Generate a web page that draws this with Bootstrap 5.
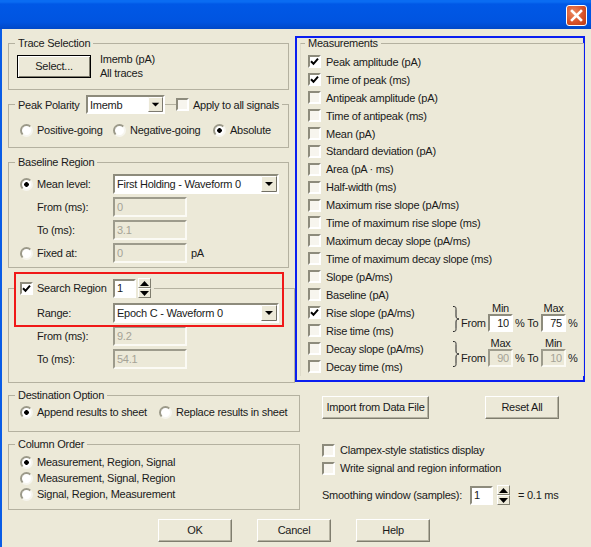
<!DOCTYPE html>
<html lang="en">
<head>
<meta charset="utf-8">
<title>Measurements dialog</title>
<link href="https://cdn.jsdelivr.net/npm/bootstrap@5.3.0/dist/css/bootstrap.min.css" rel="stylesheet">
<style>
html,body{margin:0;background:#ece9d8;overflow:hidden}
body{font-family:"Liberation Sans",Arial,sans-serif;font-size:11px;letter-spacing:-.25px;line-height:14px;color:#1a1a1a}
.dlg{width:591px;height:547px;background:#ece9d8;border-left:2px solid #0a5ce6;position:relative;box-sizing:border-box}
.ttl{height:29px;margin-left:-2px;padding:5px 4px 0 0;background:linear-gradient(#0a6cf2 0,#0a6cf2 2px,#0058e6 4px,#0054e0 22px,#0048c8 29px)}
.xbtn{width:21px;height:21px;border:1px solid #fff;border-radius:3px;background:radial-gradient(circle at 35% 35%,#ec8a60,#d8532a 55%,#bb3a12)}
.mainrow{padding:7px 0 0 6px}
.leftcol{width:287px;position:relative}
.gb{border:1px solid #b4b1a0;padding:0 8px;margin:0;min-width:0}
.gb legend{float:none;width:auto;margin:0 0 0 -2px;padding:0 3px;font-size:inherit;line-height:14px}
.w281{width:281px}.w292{width:292px}.w287{width:287px}
.g1{height:54px}.g2{height:53px;margin-top:5px}.g3{height:113px;margin-top:7px}.g4{height:105px;margin-top:10px}
.g5{height:44px}.g6{height:73px;margin-top:5px}
.pt5{padding-top:5px}
.pt6{padding-top:6px}
.pt9{padding-top:9px}
.lg-row{width:267px}
.c68{width:68px}.c76{width:76px}.c83{width:83px}.c122{width:122px}.c96{width:96px}
.tick{width:11px;height:1px;background:#b4b1a0}
.upa{margin:-3px 0 0 1px}
.redmark{position:absolute;left:6px;top:236px;width:270px;height:55px;border:2px solid #f01818;pointer-events:none;z-index:3}
.bluebox{width:290px;height:346px;border:2px solid #0a1ef0;box-sizing:border-box;position:relative;z-index:2;background:#ece9d8}
.gbm{width:284px;margin:-2px 0 0 3px;border-left-color:#dedbca;border-right-color:#dedbca;border-bottom:0;padding:0 0 0 7px;height:340px}
.gbm legend{margin-left:-3px}
.pad3{padding-top:3px}
.rw{height:17.9px}
.rw18{height:18px}
.ck,.rd{appearance:none;-webkit-appearance:none;width:13px;height:13px;margin:0 4px 0 0;flex:none;border:2px solid;border-color:#8d8b7c #fff #fff #8d8b7c;background:#f7f5ee no-repeat center;display:block}
.ck:checked{background-color:#fff;background-image:url("data:image/svg+xml,%3Csvg xmlns='http://www.w3.org/2000/svg' viewBox='0 0 9 9'%3E%3Cpath d='M1 4.2l2.5 2.6L8 1.6' fill='none' stroke='%23000' stroke-width='2'/%3E%3C/svg%3E")}
.gbm .ck,.rightlow .ck{margin-right:5px}
.rd{border-radius:50%;background-color:#fff;border-color:#9b9989 #f6f5ee #f6f5ee #9b9989}
.rd:checked{background-image:radial-gradient(circle,#000 0,#000 2px,transparent 2.6px)}
.ms3{margin-left:3px}
.ml2{margin-left:2px}
.pl20{padding-left:20px}
.btnx{border:1px solid;border-color:#fff #7f7d6e #7f7d6e #fff;border-radius:0;background:#ece9d8;color:#1a1a1a;font-size:inherit;letter-spacing:inherit;white-space:nowrap;padding:0;height:23px;box-shadow:inset -1px -1px 0 #b5b2a1}
.btnx:hover{background:#ece9d8;color:#1a1a1a}
.btn-def{width:74px;border:1px solid #000;outline:0;box-shadow:inset 1px 1px 0 #fff,inset -1px -1px 0 #7f7d6e}
.b74{width:74px}.b107{width:107px}
.txt{border:2px solid;border-color:#8d8b7c #fff #fff #8d8b7c;border-radius:0;background:#fff;font-size:inherit;letter-spacing:inherit;color:#1a1a1a;padding:0 2px;height:20px;line-height:14px;min-height:0;box-shadow:none}
.txt:disabled{background:#ece9d8;color:#a5a396;opacity:1;border-color:#9d9b8c #fbfaf4 #fbfaf4 #9d9b8c}
.i74{width:74px}.i23{width:23px;height:19px}.i25{width:25px;height:18px}
.combo{border:2px solid;border-color:#8d8b7c #fff #fff #8d8b7c;border-radius:0;font-size:inherit;letter-spacing:inherit;color:#1a1a1a;height:20px;line-height:14px;min-height:0;box-shadow:none;padding:0 18px 0 2px;background:#fff url("data:image/svg+xml,%3Csvg xmlns='http://www.w3.org/2000/svg' width='16' height='16'%3E%3Crect width='16' height='16' fill='%23ece9d8'/%3E%3Cpath d='M.5 15.5V.5h15' stroke='%23fff' fill='none'/%3E%3Cpath d='M.5 15.5h15V.5' stroke='%23716f64' fill='none'/%3E%3Cpath d='M4 6h8l-4 4z' fill='%23000'/%3E%3C/svg%3E") no-repeat right center;background-size:16px 16px;appearance:none;-webkit-appearance:none}
.cb79{width:79px;height:19px;background-size:15px 15px}.cb166{width:166px}
.spin{width:13px;margin-left:2px}
.spin .sb{height:10px;border:1px solid;border-color:#fff #7f7d6e #7f7d6e #fff;background:#ece9d8;display:flex;align-items:center;justify-content:center}
.gp6{gap:3px}
.lowrow{padding:5px 0 0 6px}
.g5r{height:14px}.g6r{height:16px}
.pt3x{padding-top:3px}
.rightlow{margin-left:22px;padding-top:8px}
.gap56{gap:56px}
.mt22{margin-top:22px}.mt8{margin-top:8px}
.c148{width:148px;white-space:nowrap}
.c147{width:145px}
.pair{display:grid;grid-template-columns:8px 27px 25px 28px 25px 15px;grid-template-rows:12px 18px;align-self:flex-end;align-items:center}
.pairbox{height:36px}
.mb8{margin-bottom:8px}.mb9{margin-bottom:9px}
.brace{grid-row:1 / span 2;margin-top:4px}
.lab{text-align:center;white-space:nowrap;margin:0 -4px}
.pad2{padding-left:2px;white-space:nowrap}
.okrow{padding:9px 0 0 156px;gap:25px}
.ne{white-space:nowrap}
</style>
</head>
<body>
<div class="dlg">
  <div class="ttl d-flex justify-content-end">
    <div class="xbtn d-flex align-items-center justify-content-center">
      <svg width="13" height="13" viewBox="0 0 13 13"><path d="M2 2l9 9M11 2l-9 9" stroke="#fff" stroke-width="2.6" stroke-linecap="square"/></svg>
    </div>
  </div>

  <div class="mainrow d-flex">
    <div class="leftcol">
      <fieldset class="gb g1 w281">
        <legend>Trace Selection</legend>
        <div class="d-flex pt5 gap-2">
          <button class="btn btnx btn-def" type="button">Select...</button>
          <div class="upa ne">Imemb (pA)<br>All traces</div>
        </div>
      </fieldset>

      <fieldset class="gb g2 w281">
        <legend class="lg-row">
          <span class="d-flex align-items-center">
            <span class="c68">Peak Polarity</span>
            <select class="combo cb79"><option>Imemb</option></select>
            <span class="tick"></span>
            <input class="ck" type="checkbox">
            <span class="ne">Apply to all signals</span>
          </span>
        </legend>
        <div class="d-flex align-items-center pt9 ne">
          <input class="rd ms3" type="radio" name="pol"><span class="c76">Positive-going</span>
          <input class="rd" type="radio" name="pol"><span class="c83">Negative-going</span>
          <input class="rd" type="radio" name="pol" checked><span>Absolute</span>
        </div>
      </fieldset>

      <fieldset class="gb g3 w281">
        <legend>Baseline Region</legend>
        <div class="d-flex flex-column gp6 pt5">
          <div class="d-flex align-items-center"><span class="c96 d-flex align-items-center"><input class="rd ms3" type="radio" name="bl" checked>Mean level:</span><select class="combo cb166"><option>First Holding - Waveform 0</option></select></div>
          <div class="d-flex align-items-center"><span class="c96 pl20">From (ms):</span><input class="form-control txt i74" disabled value="0"></div>
          <div class="d-flex align-items-center"><span class="c96 pl20">To (ms):</span><input class="form-control txt i74" disabled value="3.1"></div>
          <div class="d-flex align-items-center"><span class="c96 d-flex align-items-center"><input class="rd ms3" type="radio" name="bl">Fixed at:</span><input class="form-control txt i74" disabled value="0"><span class="ms-1">pA</span></div>
        </div>
      </fieldset>

      <fieldset class="gb g4 w287">
        <legend>
          <span class="d-flex align-items-center">
            <input class="ck ml2" type="checkbox" checked>
            <span class="ne c76">Search Region</span>
            <input class="form-control txt i23" value="1">
            <span class="spin d-flex flex-column">
              <span class="sb"><svg width="9" height="5"><path d="M4.500 0L9 5H0z"/></svg></span>
              <span class="sb"><svg width="9" height="5"><path d="M0 0h9L4.500 5z"/></svg></span>
            </span>
          </span>
        </legend>
        <div class="d-flex flex-column gp6 pt5">
          <div class="d-flex align-items-center"><span class="c96 pl20">Range:</span><select class="combo cb166"><option>Epoch C - Waveform 0</option></select></div>
          <div class="d-flex align-items-center"><span class="c96 pl20">From (ms):</span><input class="form-control txt i74" disabled value="9.2"></div>
          <div class="d-flex align-items-center"><span class="c96 pl20">To (ms):</span><input class="form-control txt i74" disabled value="54.1"></div>
        </div>
      </fieldset>
      <div class="redmark"></div>
    </div>

    <div class="bluebox">
      <fieldset class="gb gbm">
        <legend>Measurements</legend>
        <div class="pad3">
          <div class="rw d-flex align-items-center"><input class="ck" type="checkbox" checked><span>Peak amplitude (pA)</span></div>
          <div class="rw d-flex align-items-center"><input class="ck" type="checkbox" checked><span>Time of peak (ms)</span></div>
          <div class="rw d-flex align-items-center"><input class="ck" type="checkbox"><span>Antipeak amplitude (pA)</span></div>
          <div class="rw d-flex align-items-center"><input class="ck" type="checkbox"><span>Time of antipeak (ms)</span></div>
          <div class="rw d-flex align-items-center"><input class="ck" type="checkbox"><span>Mean (pA)</span></div>
          <div class="rw d-flex align-items-center"><input class="ck" type="checkbox"><span>Standard deviation (pA)</span></div>
          <div class="rw d-flex align-items-center"><input class="ck" type="checkbox"><span>Area (pA · ms)</span></div>
          <div class="rw d-flex align-items-center"><input class="ck" type="checkbox"><span>Half-width (ms)</span></div>
          <div class="rw d-flex align-items-center"><input class="ck" type="checkbox"><span>Maximum rise slope (pA/ms)</span></div>
          <div class="rw d-flex align-items-center"><input class="ck" type="checkbox"><span>Time of maximum rise slope (ms)</span></div>
          <div class="rw d-flex align-items-center"><input class="ck" type="checkbox"><span>Maximum decay slope (pA/ms)</span></div>
          <div class="rw d-flex align-items-center"><input class="ck" type="checkbox"><span>Time of maximum decay slope (ms)</span></div>
          <div class="rw d-flex align-items-center"><input class="ck" type="checkbox"><span>Slope (pA/ms)</span></div>
          <div class="rw18 d-flex align-items-center"><input class="ck" type="checkbox"><span>Baseline (pA)</span></div>
          <div class="d-flex pairbox">
            <div class="c147">
              <div class="rw18 d-flex align-items-center"><input class="ck" type="checkbox" checked><span>Rise slope (pA/ms)</span></div>
              <div class="rw18 d-flex align-items-center"><input class="ck" type="checkbox"><span>Rise time (ms)</span></div>
            </div>
            <div class="pair mb8">
              <svg class="brace" width="8" height="26" viewBox="0 0 8 26"><path d="M0 .5c3 0 3 1 3 3V10c0 2 1 3 3 3-2 0-3 1-3 3v6.500c0 2 0 3-3 3" fill="none" stroke="#222"/></svg>
              <span></span><span class="lab">Min</span><span></span><span class="lab">Max</span><span></span>
              <span>From</span><input class="form-control txt i25 text-end" value="10"><span class="pad2">% To</span><input class="form-control txt i25 text-end" value="75"><span class="pad2">%</span>
            </div>
          </div>
          <div class="d-flex pairbox">
            <div class="c147">
              <div class="rw18 d-flex align-items-center"><input class="ck" type="checkbox"><span>Decay slope (pA/ms)</span></div>
              <div class="rw18 d-flex align-items-center"><input class="ck" type="checkbox"><span>Decay time (ms)</span></div>
            </div>
            <div class="pair mb9">
              <svg class="brace" width="8" height="26" viewBox="0 0 8 26"><path d="M0 .5c3 0 3 1 3 3V10c0 2 1 3 3 3-2 0-3 1-3 3v6.500c0 2 0 3-3 3" fill="none" stroke="#222"/></svg>
              <span></span><span class="lab">Max</span><span></span><span class="lab">Min</span><span></span>
              <span>From</span><input class="form-control txt i25 text-end" disabled value="90"><span class="pad2">% To</span><input class="form-control txt i25 text-end" disabled value="10"><span class="pad2">%</span>
            </div>
          </div>
        </div>
      </fieldset>
    </div>
  </div>

  <div class="lowrow d-flex">
    <div>
      <fieldset class="gb g5 w292">
        <legend>Destination Option</legend>
        <div class="d-flex align-items-center g5r pt6 box-content ne">
          <input class="rd ms3" type="radio" name="dest" checked><span class="c122">Append results to sheet</span>
          <input class="rd" type="radio" name="dest"><span>Replace results in sheet</span>
        </div>
      </fieldset>
      <fieldset class="gb g6 w292">
        <legend>Column Order</legend>
        <div class="pt3x">
          <div class="d-flex align-items-center g6r"><input class="rd ms3" type="radio" name="ord" checked><span>Measurement, Region, Signal</span></div>
          <div class="d-flex align-items-center g6r"><input class="rd ms3" type="radio" name="ord"><span>Measurement, Signal, Region</span></div>
          <div class="d-flex align-items-center g6r"><input class="rd ms3" type="radio" name="ord"><span>Signal, Region, Measurement</span></div>
        </div>
      </fieldset>
    </div>
    <div class="rightlow">
      <div class="d-flex gap56">
        <button class="btn btnx b107" type="button">Import from Data File</button>
        <button class="btn btnx b74" type="button">Reset All</button>
      </div>
      <div class="mt22">
        <div class="rw18 d-flex align-items-center"><input class="ck" type="checkbox"><span>Clampex-style statistics display</span></div>
        <div class="rw18 d-flex align-items-center"><input class="ck" type="checkbox"><span>Write signal and region information</span></div>
      </div>
      <div class="d-flex align-items-center mt8">
        <span class="c148">Smoothing window (samples):</span>
        <input class="form-control txt i23" value="1">
        <span class="spin d-flex flex-column ms-1 me-2">
          <span class="sb"><svg width="9" height="5"><path d="M4.500 0L9 5H0z"/></svg></span>
          <span class="sb"><svg width="9" height="5"><path d="M0 0h9L4.500 5z"/></svg></span>
        </span>
        <span>= 0.1 ms</span>
      </div>
    </div>
  </div>

  <div class="okrow d-flex">
    <button class="btn btnx b74" type="button">OK</button>
    <button class="btn btnx b74" type="button">Cancel</button>
    <button class="btn btnx b74" type="button">Help</button>
  </div>
</div>
<script src="https://cdn.jsdelivr.net/npm/bootstrap@5.3.0/dist/js/bootstrap.bundle.min.js"></script>
</body>
</html>
